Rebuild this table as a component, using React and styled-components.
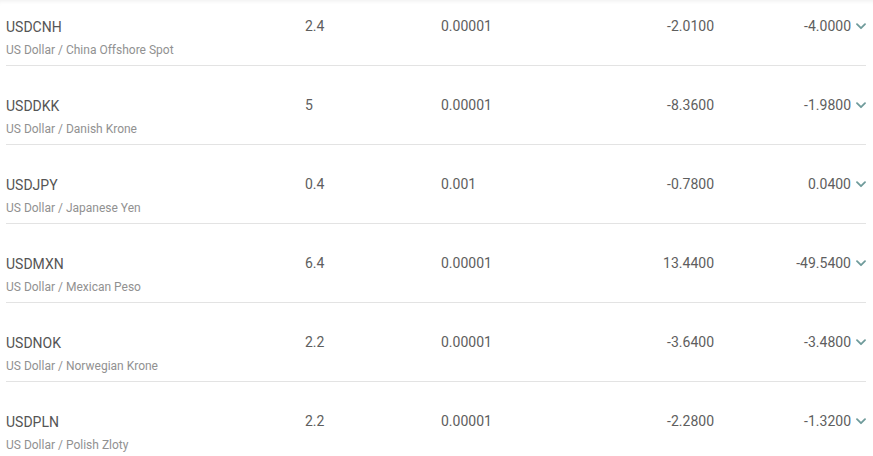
import React from "react";
import styled, { createGlobalStyle } from "styled-components";

const GlobalStyle = createGlobalStyle`
  html, body {
    margin: 0;
    padding: 0;
    background: #fff;
    font-family: Roboto, "Liberation Sans", sans-serif;
  }
`;

const Viewport = styled.div`
  height: 456px;
  overflow: hidden;
  box-shadow: inset 0 4px 4px -3px rgba(0, 0, 0, 0.07);
`;

const List = styled.div`
  margin-top: -13px;
  padding-left: 6px;
  width: 860px;
`;

const Row = styled.div`
  display: grid;
  grid-template-columns: 299px 136px 140px 133px 137px 15px;
  align-items: start;
  padding: 30px 0 8px;
  border-bottom: 1px solid #e3e3e3;
  height: 40px;
`;

const Name = styled.div`
  display: flex;
  flex-direction: column;
  gap: 7px;
`;

const Symbol = styled.span`
  font-size: 14px;
  line-height: 20px;
  color: #555;
`;

const Description = styled.span`
  font-size: 12px;
  line-height: 13px;
  color: #919191;
`;

const Cell = styled.span`
  margin-top: -1px;
  font-size: 14px;
  line-height: 20px;
  color: #5e5e5e;
  text-align: ${(p) => (p.$right ? "right" : "left")};
`;

const Toggle = styled.span`
  display: flex;
  justify-content: flex-end;
  margin-top: 6px;
`;

const Chevron = () => (
  <svg width="10" height="7" viewBox="0 0 10 7" fill="none">
    <polyline
      points="1,1.2 5,5.2 9,1.2"
      stroke="#6f9b9b"
      strokeWidth="1.8"
      strokeLinecap="round"
      strokeLinejoin="round"
    />
  </svg>
);

const rows = [
  ["USDCNH", "US Dollar / China Offshore Spot", "2.4", "0.00001", "-2.0100", "-4.0000"],
  ["USDDKK", "US Dollar / Danish Krone", "5", "0.00001", "-8.3600", "-1.9800"],
  ["USDJPY", "US Dollar / Japanese Yen", "0.4", "0.001", "-0.7800", "0.0400"],
  ["USDMXN", "US Dollar / Mexican Peso", "6.4", "0.00001", "13.4400", "-49.5400"],
  ["USDNOK", "US Dollar / Norwegian Krone", "2.2", "0.00001", "-3.6400", "-3.4800"],
  ["USDPLN", "US Dollar / Polish Zloty", "2.2", "0.00001", "-2.2800", "-1.3200"],
];

export default function App() {
  return (
    <Viewport>
      <GlobalStyle />
      <List>
        {rows.map(([sym, desc, spread, pip, long, short]) => (
          <Row key={sym}>
            <Name>
              <Symbol>{sym}</Symbol>
              <Description>{desc}</Description>
            </Name>
            <Cell>{spread}</Cell>
            <Cell>{pip}</Cell>
            <Cell $right>{long}</Cell>
            <Cell $right>{short}</Cell>
            <Toggle>
              <Chevron />
            </Toggle>
          </Row>
        ))}
      </List>
    </Viewport>
  );
}
